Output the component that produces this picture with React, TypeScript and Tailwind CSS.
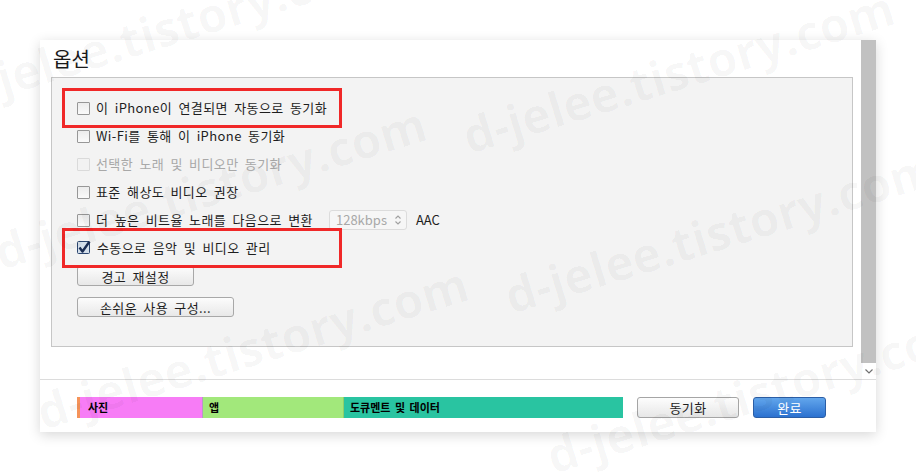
import React from 'react';

const font = "font-['Noto_Sans_CJK_KR','Noto_Sans',sans-serif]";

const CheckBox: React.FC<{ checked?: boolean; disabled?: boolean }> = ({ checked, disabled }) => {
  if (checked) {
    return (
      <svg width="14" height="14" viewBox="0 0 14 14" className="shrink-0">
        <rect x="0.5" y="0.5" width="12" height="12" rx="1" fill="#d3deea" stroke="#2c4670" />
        <path d="M2.5 6.5 L5.5 10.5 L12.5 0.5" fill="none" stroke="#1a2c52" strokeWidth="2.4" strokeLinejoin="round" />
      </svg>
    );
  }
  return (
    <span
      className={`block w-[13px] h-[13px] shrink-0 rounded-[1px] border ${
        disabled ? 'border-[#dadada] bg-[#f2f2f2]' : 'border-[#979797] bg-gradient-to-b from-[#ececec] to-[#fafafa]'
      }`}
    />
  );
};

const Row: React.FC<{ checked?: boolean; disabled?: boolean; children: React.ReactNode }> = ({ checked, disabled, children }) => (
  <div className="h-[28px] flex items-center gap-[6px]">
    <CheckBox checked={checked} disabled={disabled} />
    <span className={`text-[13px] tracking-[0.4px] [word-spacing:3px] ${disabled ? 'text-[#a8a8a8]' : 'text-[#1e1e1e]'}`}>{children}</span>
  </div>
);

// watermark tile origins (bottom-left of each text)
const marks: [number, number][] = [
  [-39, 116],
  [3, 276],
  [45, 436],
  [429, 0],
  [471, 160],
  [513, 320],
  [555, 480],
];

export default function App() {
  return (
    <div className={`relative w-[916px] h-[472px] bg-white overflow-hidden pt-[40px] pl-[40px] ${font}`}>
      <div className="w-[836px] h-[392px] bg-white shadow-[0_3px_12px_rgba(0,0,0,0.16)] flex flex-col">
        {/* options area + scrollbar */}
        <div className="flex h-[339px]">
          <div className="flex-1 pl-[11px] pr-[8px]">
            <div className="h-[37px] flex items-center pl-[2px]">
              <h1 className="text-[20px] text-[#1a1a1a] leading-none">옵션</h1>
            </div>
            <div className="relative h-[270px] border border-[#c6c6c6] bg-[#f3f3f3] pl-[25px] pt-[16px]">
              <Row>이 iPhone이 연결되면 자동으로 동기화</Row>
              <Row>Wi-Fi를 통해 이 iPhone 동기화</Row>
              <Row disabled>선택한 노래 및 비디오만 동기화</Row>
              <Row>표준 해상도 비디오 권장</Row>
              <div className="h-[28px] flex items-center">
                <div className="flex items-center gap-[6px]">
                  <CheckBox />
                  <span className="text-[13px] tracking-[0.4px] [word-spacing:3px] text-[#1e1e1e]">더 높은 비트율 노래를 다음으로 변환</span>
                </div>
                <div className="ml-[16px] w-[78px] h-[20px] border border-[#dcdcdc] rounded-[3px] bg-[#f6f6f6] flex items-center pl-[6px] pr-[4px] justify-between">
                  <span className="text-[13px] text-[#a8a8a8]">128kbps</span>
                  <svg width="8" height="12" viewBox="0 0 8 12">
                    <path d="M1.5 4.5 L4 2 L6.5 4.5 M1.5 7.5 L4 10 L6.5 7.5" fill="none" stroke="#a0a0a0" strokeWidth="1.1" />
                  </svg>
                </div>
                <span className="ml-[9px] text-[13px] text-[#1e1e1e]">AAC</span>
              </div>
              <Row checked>수동으로 음악 및 비디오 관리</Row>

              <button className="mt-[4px] block w-[117px] h-[20px] rounded-[3px] border border-[#a8a8a8] bg-gradient-to-b from-[#fcfcfc] to-[#e8e8e8] text-[13px] tracking-[0.4px] text-[#1e1e1e] leading-none [word-spacing:3px]">
                경고 재설정
              </button>
              <button className="mt-[11px] block w-[157px] h-[20px] rounded-[3px] border border-[#a8a8a8] bg-gradient-to-b from-[#fcfcfc] to-[#e8e8e8] text-[13px] tracking-[0.4px] text-[#1e1e1e] leading-none [word-spacing:3px]">
                손쉬운 사용 구성...
              </button>

              {/* annotation boxes */}
              <div className="absolute left-[10px] top-[10px] w-[280px] h-[40px] border-[3px] border-[#f02828]" />
              <div className="absolute left-[10px] top-[150px] w-[280px] h-[40px] border-[3px] border-[#f02828]" />
            </div>
          </div>
          <div className="w-[15px] flex flex-col">
            <div className="h-[323px] bg-[#c1c1c1]" />
            <div className="flex-1 flex items-center justify-center">
              <svg width="8" height="5" viewBox="0 0 8 5">
                <path d="M0.5 0.5 L4 4 L7.5 0.5" fill="none" stroke="#707070" strokeWidth="1.2" />
              </svg>
            </div>
          </div>
        </div>

        {/* storage bar + buttons */}
        <div className="flex-1 border-t border-[#dcdcdc] flex items-start pt-[17px] pl-[37px]">
          <div className="flex h-[21px] w-[546px] text-[11px] font-bold text-black leading-none">
            <div className="w-[3px] bg-[#f5935a]" />
            <div className="w-[122px] bg-[#f77cf6] flex items-center pl-[8px]">사진</div>
            <div className="w-[141px] bg-[#a2e87b] border-l border-[#b895c8] flex items-center pl-[6px]">앱</div>
            <div className="flex-1 bg-[#29c4a1] border-l border-[#8fcf6a] flex items-center pl-[6px] [word-spacing:2px]">도큐멘트 및 데이터</div>
          </div>
          <button className="ml-[14px] w-[102px] h-[21px] rounded-[3px] border border-[#a5a5a5] bg-gradient-to-b from-[#fdfdfd] to-[#e7e7e7] text-[13px] tracking-[0.4px] text-[#1e1e1e] leading-none">
            동기화
          </button>
          <button className="ml-[14px] w-[73px] h-[21px] rounded-[3px] border border-[#2b5ea6] bg-gradient-to-b from-[#62a6ec] to-[#2b71d0] text-[13px] tracking-[0.4px] text-white leading-none">
            완료
          </button>
        </div>
      </div>

      {/* watermark */}
      {marks.map(([x, y], i) => (
        <span
          key={i}
          className="absolute font-['Open_Sans',sans-serif] font-bold text-[48px] leading-none h-[48px] whitespace-nowrap text-black/[0.03] origin-bottom-left -rotate-[17deg] pointer-events-none select-none"
          style={{ left: x, top: y - 48 }}
        >
          d-jelee.tistory.com
        </span>
      ))}
    </div>
  );
}
